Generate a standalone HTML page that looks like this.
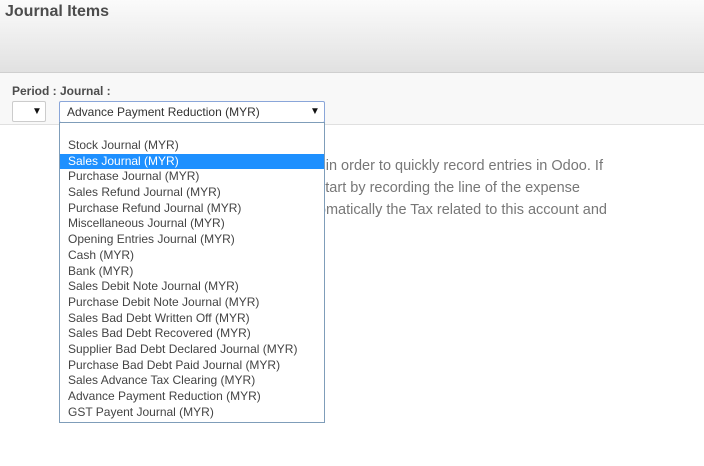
<!DOCTYPE html>
<html><head><meta charset="utf-8"><style>
*{margin:0;padding:0;box-sizing:border-box}
body{width:704px;height:466px;background:#fff;font-family:"Liberation Sans",Arial,sans-serif;position:relative;overflow:hidden}
.hdr{position:absolute;left:0;top:0;width:704px;height:73px;background:linear-gradient(#fbfbfb,#e1e1e1);border-bottom:1px solid #cfcfcf}
.hdr h1{position:absolute;left:5px;top:3px;font-size:16px;font-weight:bold;color:#4c4c4c}
.bar{position:absolute;left:0;top:73px;width:704px;height:52px;background:#f8f8f8;border-bottom:1px solid #e0e0e0}
.lbl{position:absolute;left:12px;top:84px;font-size:12px;font-weight:bold;color:#4c4c4c}
.s1{position:absolute;left:12px;top:101px;width:34px;height:21px;border:1px solid #ccc;border-radius:2px;background:#fff}
.s2{position:absolute;left:59px;top:101px;width:266px;height:22px;border:1px solid #8aa6d9;border-radius:2px;background:#fff;font-size:12px;color:#333;padding:3px 0 0 7px}
.arr{position:absolute;font-size:10px;color:#111}
.dd{position:absolute;left:59px;top:122px;width:266px;height:301px;border:1px solid #7f9db9;background:#fff;z-index:2;padding-top:15px}
.dd div{height:15.7px;line-height:15.7px;font-size:12px;color:#444;padding-left:8px;white-space:nowrap}
.dd .sel{background:#1e90ff;color:#fff}
.txt{position:absolute;font-size:14.5px;color:#777;white-space:nowrap;text-align:right}
</style></head><body>
<div class="hdr"><h1>Journal Items</h1></div>
<div class="bar"></div>
<div class="lbl">Period : Journal :</div>
<div class="s1"><span class="arr" style="left:19px;top:4px">▼</span></div>
<div class="s2">Advance Payment Reduction (MYR)<span class="arr" style="left:250px;top:4px">▼</span></div>
<div class="txt" style="right:101px;top:158px">journals in order to quickly record entries in Odoo. If</div>
<div class="txt" style="right:124px;top:180px">you can start by recording the line of the expense</div>
<div class="txt" style="right:97px;top:202px">and automatically the Tax related to this account and</div>
<div class="dd">
<div>Stock Journal (MYR)</div>
<div class="sel">Sales Journal (MYR)</div>
<div>Purchase Journal (MYR)</div>
<div>Sales Refund Journal (MYR)</div>
<div>Purchase Refund Journal (MYR)</div>
<div>Miscellaneous Journal (MYR)</div>
<div>Opening Entries Journal (MYR)</div>
<div>Cash (MYR)</div>
<div>Bank (MYR)</div>
<div>Sales Debit Note Journal (MYR)</div>
<div>Purchase Debit Note Journal (MYR)</div>
<div>Sales Bad Debt Written Off (MYR)</div>
<div>Sales Bad Debt Recovered (MYR)</div>
<div>Supplier Bad Debt Declared Journal (MYR)</div>
<div>Purchase Bad Debt Paid Journal (MYR)</div>
<div>Sales Advance Tax Clearing (MYR)</div>
<div>Advance Payment Reduction (MYR)</div>
<div>GST Payent Journal (MYR)</div>
</div>
</body></html>
